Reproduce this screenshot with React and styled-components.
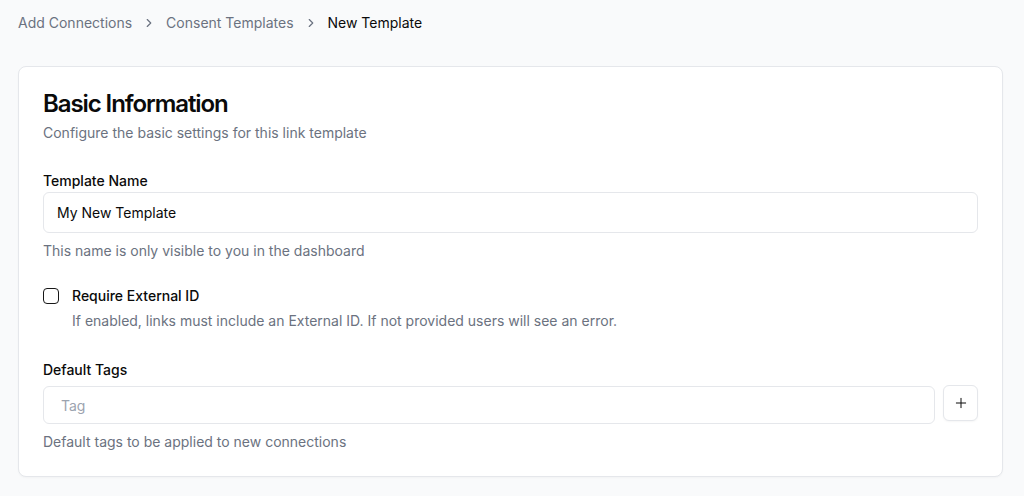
import { createGlobalStyle, styled } from "styled-components"
import { ChevronRight, Plus } from "lucide-react"

const GlobalStyle = createGlobalStyle`
  html, body {
    margin: 0;
    padding: 0;
    background: #f9fafb;
    font-family: Inter, "Noto Sans", sans-serif;
    color: #0a0a0a;
    -webkit-font-smoothing: antialiased;
  }
  * { box-sizing: border-box; }
`

export default function App() {
  return (
    <>
      <GlobalStyle />
      <Page>
        <Breadcrumb>
          <Crumb>Add Connections</Crumb>
          <Chevron />
          <Crumb>Consent Templates</Crumb>
          <Chevron />
          <Crumb $current>New Template</Crumb>
        </Breadcrumb>

        <Card>
          <CardHeader>
            <Title>Basic Information</Title>
            <Subtitle>Configure the basic settings for this link template</Subtitle>
          </CardHeader>

          <Field $top={28} $gap={1}>
            <Label>Template Name</Label>
            <Input defaultValue="My New Template" />
            <Hint>This name is only visible to you in the dashboard</Hint>
          </Field>

          <CheckRow>
            <CheckBox type="checkbox" />
            <CheckText>
              <Label>Require External ID</Label>
              <Hint>If enabled, links must include an External ID. If not provided users will see an error.</Hint>
            </CheckText>
          </CheckRow>

          <Field $top={29} $gap={6}>
            <Label>Default Tags</Label>
            <TagRow>
              <Input placeholder="Tag" $tag />
              <IconButton>
                <Plus size={16} strokeWidth={1.5} />
              </IconButton>
            </TagRow>
            <Hint>Default tags to be applied to new connections</Hint>
          </Field>
        </Card>
      </Page>
    </>
  )
}

const Page = styled.div`
  padding: 13px 21px 18px 18px;
  display: flex;
  flex-direction: column;
  gap: 33px;
`

const Breadcrumb = styled.nav`
  display: flex;
  align-items: center;
  gap: 10px;
  font-size: 14px;
  line-height: 20px;
`

const Crumb = styled.span`
  color: ${(p) => (p.$current ? "#0a0a0a" : "#6b7280")};
`

const Chevron = styled(ChevronRight)`
  width: 14px;
  height: 14px;
  color: #6b7280;
`

const Card = styled.section`
  background: #fff;
  border: 1px solid #e5e7eb;
  border-radius: 8px;
  padding: 21px 24px 24px 24px;
  display: flex;
  flex-direction: column;
  box-shadow: 0 1px 2px rgba(0, 0, 0, 0.03);
`

const CardHeader = styled.div`
  display: flex;
  flex-direction: column;
  gap: 3px;
`

const Title = styled.h2`
  margin: 0;
  font-size: 24px;
  line-height: 32px;
  font-weight: 600;
  letter-spacing: -0.045em;
`

const Subtitle = styled.p`
  margin: 0;
  font-size: 14px;
  line-height: 20px;
  color: #6b7280;
`

const Field = styled.div`
  display: flex;
  flex-direction: column;
  margin-top: ${(p) => p.$top}px;

  & > label {
    margin-bottom: ${(p) => p.$gap}px;
  }

  & > p {
    margin-top: 8px;
  }
`

const Label = styled.label`
  font-size: 14px;
  line-height: 20px;
  font-weight: 500;
  color: #0a0a0a;
`

const Hint = styled.p`
  margin: 0;
  font-size: 14px;
  line-height: 20px;
  color: #6b7280;
`

const Input = styled.input`
  width: 100%;
  height: ${(p) => (p.$tag ? "38px" : "41px")};
  border: 1px solid #e5e7eb;
  border-radius: 6px;
  padding: 0 ${(p) => (p.$tag ? "17px" : "13px")};
  font-family: inherit;
  font-size: 14px;
  color: #0a0a0a;
  background: #fff;
  outline: none;

  &::placeholder {
    color: #9ca3af;
  }
`

const TagRow = styled.div`
  display: flex;
  align-items: flex-start;
  gap: 8px;

  & > input {
    flex: 1;
    min-width: 0;
  }
`

const IconButton = styled.button`
  flex: none;
  width: 35px;
  height: 36px;
  margin-top: -1px;
  display: flex;
  align-items: center;
  justify-content: center;
  border: 1px solid #e5e7eb;
  border-radius: 6px;
  background: #fff;
  color: #0a0a0a;
  padding: 0;
  box-shadow: 0 1px 2px rgba(0, 0, 0, 0.04);
`

const CheckRow = styled.div`
  display: flex;
  align-items: flex-start;
  gap: 13px;
  margin-top: 25px;
`

const CheckBox = styled.input`
  appearance: none;
  margin: 2px 0 0 0;
  width: 16px;
  height: 16px;
  border: 1.5px solid #171717;
  border-radius: 4px;
  background: #fff;
  flex: none;
`

const CheckText = styled.div`
  display: flex;
  flex-direction: column;
  gap: 5px;
`
